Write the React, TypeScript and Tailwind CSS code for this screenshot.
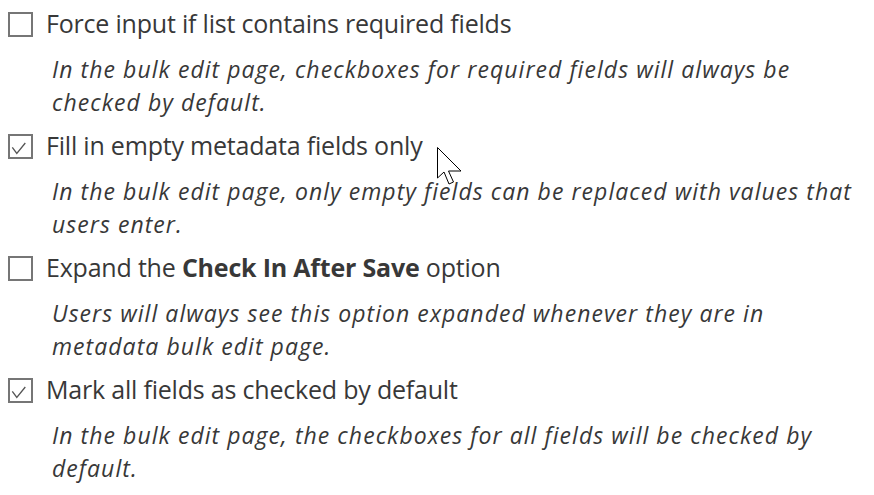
import React from "react";

type Item = {
  checked: boolean;
  title: React.ReactNode;
  lines: string[];
};

const items: Item[] = [
  {
    checked: false,
    title: "Force input if list contains required fields",
    lines: [
      "In the bulk edit page, checkboxes for required fields will always be",
      "checked by default.",
    ],
  },
  {
    checked: true,
    title: "Fill in empty metadata fields only",
    lines: [
      "In the bulk edit page, only empty fields can be replaced with values that",
      "users enter.",
    ],
  },
  {
    checked: false,
    title: (
      <>
        Expand the <span className="font-bold">Check In After Save</span> option
      </>
    ),
    lines: [
      "Users will always see this option expanded whenever they are in",
      "metadata bulk edit page.",
    ],
  },
  {
    checked: true,
    title: "Mark all fields as checked by default",
    lines: [
      "In the bulk edit page, the checkboxes for all fields will be checked by",
      "default.",
    ],
  },
];

function Box({ checked }: { checked: boolean }) {
  return (
    <div className="mt-[6px] w-[25px] h-[25px] border-2 border-[#767676] bg-white shrink-0">
      {checked && (
        <svg width="21" height="21" viewBox="0 0 21 21" className="block">
          <path d="M2.3 11.3 L6.8 17.5 L15.3 7" fill="none" stroke="#555555" strokeWidth="1.3" />
        </svg>
      )}
    </div>
  );
}

export default function App() {
  return (
    <div
      className="relative w-[874px] h-[495px] bg-white text-[#383838] pl-[8px] pt-[6px] overflow-hidden"
      style={{ fontFamily: '"Open Sans", "Noto Sans", sans-serif' }}
    >
      {items.map((it, i) => (
        <div key={i} className="mb-[9px]">
          <div className="flex items-start gap-[13px] h-[34px]">
            <Box checked={it.checked} />
            <div className="text-[25px] leading-[34px] tracking-[-0.2px] whitespace-nowrap">
              {it.title}
            </div>
          </div>
          <div className="mt-[13px] ml-[44px] italic text-[23px] leading-[33px] tracking-[1.05px] whitespace-nowrap">
            {it.lines.map((l, j) => (
              <div key={j}>{l}</div>
            ))}
          </div>
        </div>
      ))}
      <svg
        className="absolute left-[437px] top-[147px]"
        width="28"
        height="40"
        viewBox="0 0 28 40"
      >
        <path
          d="M0.5 0.5 L0.5 31 L7 25 L12 37 L16.5 35 L11.5 24 L24 24 Z"
          fill="white"
          stroke="black"
          strokeWidth="1"
          strokeLinejoin="miter"
        />
      </svg>
    </div>
  );
}
